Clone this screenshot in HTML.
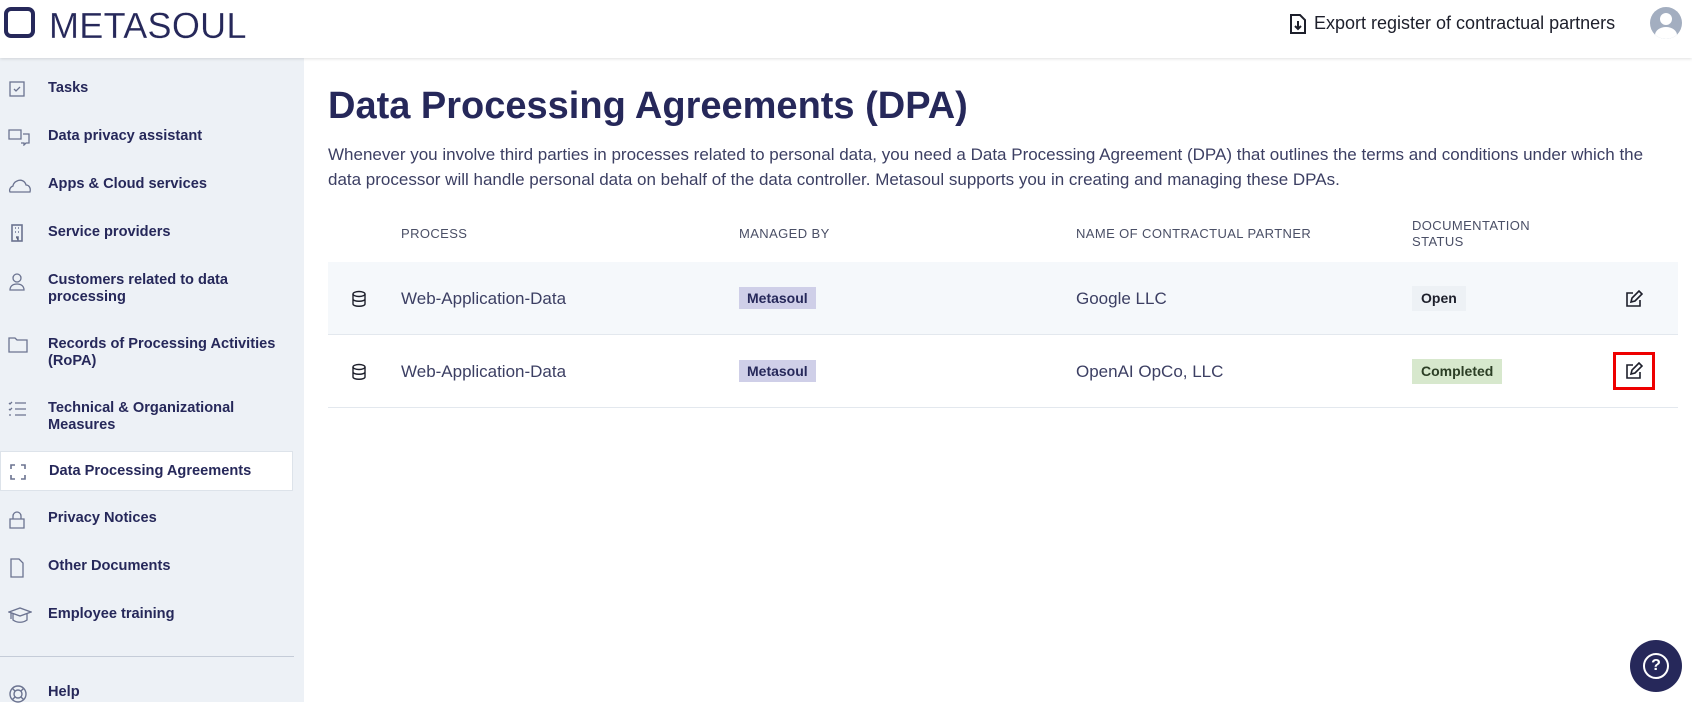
<!DOCTYPE html>
<html><head><meta charset="utf-8"><style>
*{box-sizing:border-box;margin:0;padding:0}
body{width:1692px;height:702px;overflow:hidden;font-family:"Liberation Sans",sans-serif;background:#fff;color:#26285a;position:relative}
.hdr{position:absolute;left:0;top:0;width:1692px;height:58px;background:#fff;box-shadow:0 1px 3px rgba(0,0,0,.12);z-index:2}
.logo{position:absolute;left:4px;top:7px;width:31px;height:31px;border:4px solid #26285a;border-radius:7px}
.logotxt{position:absolute;left:49px;top:5px;font-size:36px;color:#26285a;letter-spacing:0.3px;-webkit-text-stroke:0.2px #fff}
.exp{position:absolute;left:1290px;top:13px;font-size:18px;color:#1d1f2b;display:flex;align-items:center;gap:8px}
.av{position:absolute;left:1650px;top:7px;width:32px;height:32px;border-radius:50%;background:#a3aec0;overflow:hidden}
.side{position:absolute;left:0;top:58px;width:304px;height:644px;background:#edf1f6}
.it{position:absolute;left:0;width:293px;font-size:14.6px;font-weight:bold;color:#26285a;line-height:17px}
.it span{position:absolute;left:48px}
.it svg{position:absolute;left:8px}
.act{background:#fff;border:1px solid #dde3ea;height:40px}
.main h1{position:absolute;left:328px;top:85px;font-size:38px;font-weight:bold;color:#26285a}
.desc{position:absolute;left:328px;top:142px;width:1352px;font-size:17px;line-height:25px;color:#3c3f63}
.th{position:absolute;top:226px;font-size:13px;color:#4a4f66;letter-spacing:.4px;line-height:16px}
.row{position:absolute;left:328px;width:1350px;border-bottom:1px solid #e3e8ee}
.c{position:absolute;font-size:17px;color:#3c3f63}
.tag{position:absolute;font-size:14px;font-weight:bold;padding:3px 8px}
</style></head><body>
<div class="hdr">
<div class="logo"></div><div class="logotxt">METASOUL</div>
<div class="exp"><svg width="16" height="20" viewBox="0 0 16 20"><path d="M1 1h9l5 5v13H1z" fill="none" stroke="#1d1f2b" stroke-width="2"/><path d="M8 7v8M5 12l3 3 3-3" fill="none" stroke="#1d1f2b" stroke-width="2"/></svg>Export register of contractual partners</div>
<div class="av"><div style="position:absolute;left:10px;top:6px;width:12px;height:12px;border-radius:50%;background:#fff"></div><div style="position:absolute;left:5px;top:20px;width:22px;height:16px;border-radius:50%;background:#fff"></div></div>
</div>
<div class="side">
<div class="it" style="top:22px"><svg width="18" height="18"><rect x="2" y="2" width="14" height="14" fill="none" stroke="#6b7390" stroke-width="1.3"/><path d="M6 9l2 2 4-4" fill="none" stroke="#6b7390" stroke-width="1.3"/></svg><span>Tasks</span></div>
<div class="it" style="top:70px"><svg width="22" height="18"><path d="M1 2h12v9H1zM15 6h6v9h-3l-2 2v-2h-3" fill="none" stroke="#6b7390" stroke-width="1.3"/></svg><span>Data privacy assistant</span></div>
<div class="it" style="top:118px"><svg width="24" height="18"><path d="M2 16h20c1-4-1-7-4-7-1-4-5-6-9-4-3 1-4 4-4 5-3 1-4 4-3 6z" fill="none" stroke="#6b7390" stroke-width="1.3"/></svg><span>Apps &amp; Cloud services</span></div>
<div class="it" style="top:166px"><svg width="18" height="18"><rect x="4" y="1" width="10" height="16" fill="none" stroke="#6b7390" stroke-width="1.6"/><path d="M7 4h1M10 4h1M7 8h1M10 8h1M8 13h2v4" stroke="#6b7390" stroke-width="1.6"/></svg><span>Service providers</span></div>
<div class="it" style="top:214px"><svg width="18" height="20"><circle cx="9" cy="6" r="4" fill="none" stroke="#6b7390" stroke-width="1.3"/><path d="M2 18c0-4 3-6 7-6s7 2 7 6z" fill="none" stroke="#6b7390" stroke-width="1.3"/></svg><span>Customers related to data<br>processing</span></div>
<div class="it" style="top:278px"><svg width="20" height="18"><path d="M1 2h6l2 2h10v12H1z" fill="none" stroke="#6b7390" stroke-width="1.3"/></svg><span>Records of Processing Activities<br>(RoPA)</span></div>
<div class="it" style="top:342px"><svg width="20" height="18"><path d="M7 3h11M7 9h11M7 15h11M1 3l1 1 2-2M1 9l1 1 2-2M1 15h2" fill="none" stroke="#6b7390" stroke-width="1.3"/></svg><span>Technical &amp; Organizational<br>Measures</span></div>
<div class="it act" style="top:393px"><svg width="18" height="18" style="top:11px"><path d="M2 6V2h4M12 2h4v4M16 12v4h-4M6 16H2v-4" fill="none" stroke="#6b7390" stroke-width="1.6"/></svg><span style="top:11px">Data Processing Agreements</span></div>
<div class="it" style="top:452px"><svg width="18" height="20"><path d="M5 9V6a4 4 0 0 1 8 0v3M2 9h14v9H2z" fill="none" stroke="#6b7390" stroke-width="1.3"/></svg><span>Privacy Notices</span></div>
<div class="it" style="top:500px"><svg width="18" height="20"><path d="M3 1h8l4 4v14H3z" fill="none" stroke="#6b7390" stroke-width="1.3"/></svg><span>Other Documents</span></div>
<div class="it" style="top:548px"><svg width="24" height="18"><path d="M1 6l11-4 11 4-11 4zM5 8v6c4 3 10 3 14 0V8M3 7v6" fill="none" stroke="#6b7390" stroke-width="1.3"/></svg><span>Employee training</span></div>
<div style="position:absolute;left:0;top:598px;width:294px;height:1px;background:#c5ccd8"></div>
<div class="it" style="top:626px"><svg width="20" height="20"><circle cx="10" cy="10" r="8" fill="none" stroke="#6b7390" stroke-width="1.4"/><circle cx="10" cy="10" r="4" fill="none" stroke="#6b7390" stroke-width="1.4"/><path d="M4 4l3 3M16 4l-3 3M4 16l3-3M16 16l-3-3" stroke="#6b7390" stroke-width="1.4"/></svg><span>Help</span></div>
</div>
<div class="main">
<h1>Data Processing Agreements (DPA)</h1>
<div class="desc">Whenever you involve third parties in processes related to personal data, you need a Data Processing Agreement (DPA) that outlines the terms and conditions under which the data processor will handle personal data on behalf of the data controller. Metasoul supports you in creating and managing these DPAs.</div>
<div class="th" style="left:401px;top:226px">PROCESS</div>
<div class="th" style="left:739px">MANAGED BY</div>
<div class="th" style="left:1076px">NAME OF CONTRACTUAL PARTNER</div>
<div class="th" style="left:1412px;top:218px">DOCUMENTATION<br>STATUS</div>
<div class="row" style="top:262px;height:73px;background:#f5f8fb"></div>
<div class="row" style="top:335px;height:73px"></div>
<svg style="position:absolute;left:351px;top:290px" width="16" height="18"><ellipse cx="8" cy="4" rx="6" ry="2.5" fill="none" stroke="#1d1f2b" stroke-width="1.4"/><path d="M2 4v10c0 3 12 3 12 0V4M2 9c0 3 12 3 12 0" fill="none" stroke="#1d1f2b" stroke-width="1.4"/></svg>
<svg style="position:absolute;left:351px;top:363px" width="16" height="18"><ellipse cx="8" cy="4" rx="6" ry="2.5" fill="none" stroke="#1d1f2b" stroke-width="1.4"/><path d="M2 4v10c0 3 12 3 12 0V4M2 9c0 3 12 3 12 0" fill="none" stroke="#1d1f2b" stroke-width="1.4"/></svg>
<div class="c" style="left:401px;top:289px">Web-Application-Data</div>
<div class="c" style="left:401px;top:362px">Web-Application-Data</div>
<div class="tag" style="left:739px;top:287px;background:#cfcfe8;color:#26285a">Metasoul</div>
<div class="tag" style="left:739px;top:360px;background:#cfcfe8;color:#26285a">Metasoul</div>
<div class="c" style="left:1076px;top:289px">Google LLC</div>
<div class="c" style="left:1076px;top:362px">OpenAI OpCo, LLC</div>
<div class="tag" style="left:1412px;top:286px;background:#edf1f5;color:#1d1f2b;padding:4px 9px 5px">Open</div>
<div class="tag" style="left:1412px;top:359px;background:#d7e8cd;color:#2c3e25;padding:4px 9px 5px">Completed</div>
<svg style="position:absolute;left:1625px;top:290px" width="18" height="18"><path d="M8 3H2v13h13V10" fill="none" stroke="#1d1f2b" stroke-width="1.6"/><path d="M6 12l1-4 7-7 3 3-7 7z" fill="none" stroke="#1d1f2b" stroke-width="1.6"/></svg>
<div style="position:absolute;left:1613px;top:352px;width:42px;height:38px;border:3px solid #e00"></div>
<svg style="position:absolute;left:1625px;top:362px" width="18" height="18"><path d="M8 3H2v13h13V10" fill="none" stroke="#1d1f2b" stroke-width="1.6"/><path d="M6 12l1-4 7-7 3 3-7 7z" fill="none" stroke="#1d1f2b" stroke-width="1.6"/></svg>
</div>
<div style="position:absolute;left:1630px;top:640px;width:52px;height:52px;border-radius:50%;background:#26285a"><div style="position:absolute;left:13px;top:13px;width:26px;height:26px;border:2.5px solid #fff;border-radius:50%;color:#fff;font-weight:bold;font-size:16px;text-align:center;line-height:21px">?</div></div>
</body></html>
